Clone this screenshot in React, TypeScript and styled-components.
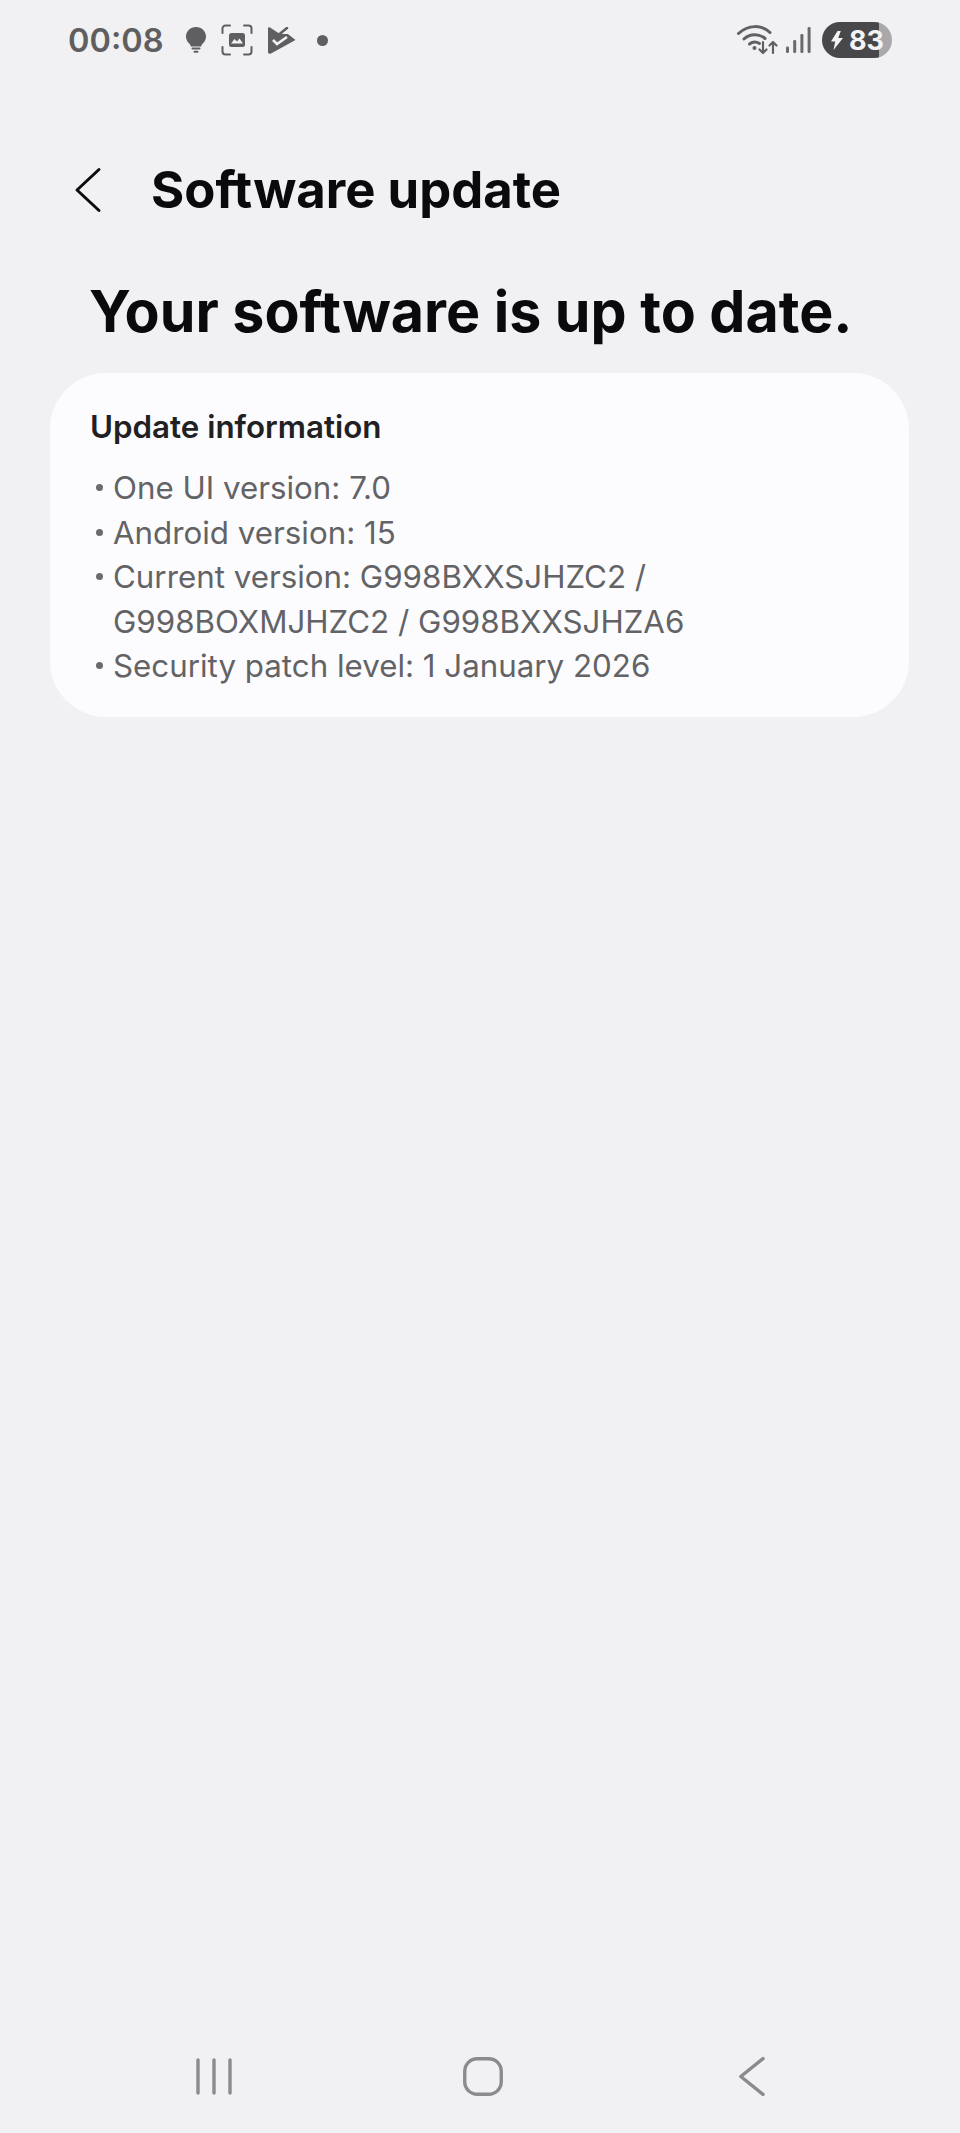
import React from 'react';
import styled, { createGlobalStyle } from 'styled-components';

const GlobalStyle = createGlobalStyle`
  html, body {
    margin: 0;
    padding: 0;
    background: #f1f1f3;
    font-family: Inter, "Noto Sans", "Liberation Sans", sans-serif;
  }
`;

const infoLines = [
  ['One UI version: 7.0'],
  ['Android version: 15'],
  ['Current version: G998BXXSJHZC2 /', 'G998BOXMJHZC2 / G998BXXSJHZA6'],
  ['Security patch level: 1 January 2026'],
];

const BulbIcon = () => (
  <svg width="20" height="26" viewBox="0 0 20 26" fill="#5f5f61">
    <path d="M10 0C4.400 0 0 4.200 0 9.400c0 3.200 1.500 5.300 3.200 7 1 1 1.500 2 1.700 3h10.200c.2-1 .7-2 1.700-3 1.700-1.700 3.200-3.800 3.200-7C20 4.200 15.600 0 10 0z" />
    <rect x="5.500" y="20.500" width="9" height="2" rx="1" />
    <rect x="7.500" y="23.800" width="5" height="2" rx="1" />
  </svg>
);

const CaptureIcon = () => (
  <svg width="32" height="32" viewBox="0 0 32 32" fill="none">
    <path
      d="M1.500 9V4.500a3 3 0 0 1 3-3H9M23 1.500h4.500a3 3 0 0 1 3 3V9M30.500 23v4.500a3 3 0 0 1-3 3H23M9 30.500H4.500a3 3 0 0 1-3-3V23"
      stroke="#5f5f61"
      strokeWidth="2"
      strokeLinecap="round"
    />
    <rect x="8" y="9" width="16" height="14" rx="2.500" fill="#5f5f61" />
    <path d="M10 19.500l3.500-4.500 2.500 2.500 2.500-3 3.500 5z" fill="#f1f1f3" />
  </svg>
);

const FlagCheckIcon = () => (
  <svg width="28" height="27" viewBox="0 0 28 27">
    <path d="M0 1.500C0 .3 1 0 2 .6L12 7l8 0 7.500 6L3 26.500c-1.500.8-3 .2-3-1.500z" fill="#5f5f61" />
    <path d="M11 7.500L19 1" stroke="#5f5f61" strokeWidth="2.600" fill="none" strokeLinecap="round" />
    <path d="M19.500 6.500L22 4" stroke="#f1f1f3" strokeWidth="3" fill="none" />
    <path d="M5 13l4 4 10-7" stroke="#f1f1f3" strokeWidth="2.600" fill="none" />
  </svg>
);

const WifiIcon = () => (
  <svg width="41" height="30" viewBox="0 0 41 30" fill="none">
    <g stroke="#616163" strokeWidth="3" strokeLinecap="round">
      <path d="M1.500 8.500C11 -0.500 25 -0.500 33 7.500" />
      <path d="M7 14c6-5.500 15-5.500 21-.5" />
      <path d="M12.500 19c3-2.300 7-2.300 10-.5" />
    </g>
    <circle cx="17.500" cy="23" r="2" fill="#616163" />
    <g stroke="#616163" strokeWidth="2.200" strokeLinecap="round" strokeLinejoin="round">
      <path d="M26 17v11M22.500 24.500l3.500 3.500 3.500-3.500" />
      <path d="M36 28V17M32.500 20.500L36 17l3.500 3.500" />
    </g>
  </svg>
);

const SignalIcon = () => (
  <svg width="25" height="26" viewBox="0 0 25 26" fill="#6a6a6c">
    <rect x="0" y="19.500" width="3" height="6.500" rx="1.200" />
    <rect x="7.200" y="13" width="3" height="13" rx="1.200" />
    <rect x="14.400" y="7" width="3" height="19" rx="1.200" />
    <rect x="21.600" y="0" width="3" height="26" rx="1.200" />
  </svg>
);

const BoltIcon = () => (
  <svg width="12" height="19" viewBox="0 0 12 19" fill="#f4f4f5">
    <path d="M6.500 0L0 10.500h4.200L2.500 19 12 7H7.200L9.800 0z" />
  </svg>
);

const RecentsIcon = () => (
  <svg width="36" height="42" viewBox="0 0 36 42" fill="none" stroke="#8b8b8d" strokeWidth="3.400" strokeLinecap="round">
    <path d="M2 5v33M18 5v33M34 5v33" />
  </svg>
);

const HomeIcon = () => (
  <svg width="42" height="42" viewBox="0 0 42 42" fill="none">
    <rect x="2.750" y="3.750" width="36.500" height="35.500" rx="12.500" stroke="#8b8b8d" strokeWidth="3.400" />
  </svg>
);

const NavBackIcon = () => (
  <svg width="27" height="42" viewBox="0 0 27 42" fill="none">
    <path d="M25 3.600L2.800 21.500 25 39.400" stroke="#8b8b8d" strokeWidth="3.400" strokeLinecap="round" strokeLinejoin="round" />
  </svg>
);

const App = () => (
  <>
    <GlobalStyle />
    <Page>
      <StatusBar>
        <StatusLeft>
          <Clock>00:08</Clock>
          <Notifications>
            <BulbIcon />
            <CaptureIcon />
            <FlagCheckIcon />
            <MoreDot />
          </Notifications>
        </StatusLeft>
        <StatusRight>
          <WifiIcon />
          <SignalIcon />
          <Battery>
            <BoltIcon />
            <BatteryLevel>83</BatteryLevel>
          </Battery>
        </StatusRight>
      </StatusBar>

      <Header>
        <BackButton>
          <svg width="28" height="48" viewBox="0 0 28 48" fill="none">
            <path d="M25 3.500L3 24l22 20.500" stroke="#0c0c0e" strokeWidth="3" strokeLinecap="round" strokeLinejoin="round" />
          </svg>
        </BackButton>
        <HeaderTitle>Software update</HeaderTitle>
      </Header>

      <Headline>Your software is up to date.</Headline>

      <InfoCard>
        <CardTitle>Update information</CardTitle>
        <InfoList>
          {infoLines.map((lines) => (
            <InfoItem key={lines[0]}>
              {lines.map((line) => (
                <div key={line}>{line}</div>
              ))}
            </InfoItem>
          ))}
        </InfoList>
      </InfoCard>

      <NavBar>
        <NavSlot><RecentsIcon /></NavSlot>
        <NavSlot><HomeIcon /></NavSlot>
        <NavSlot><NavBackIcon /></NavSlot>
      </NavBar>
    </Page>
  </>
);

export default App;

const Page = styled.div`
  width: 960px;
  height: 2133px;
  background: #f1f1f3;
  display: flex;
  flex-direction: column;
  overflow: hidden;
`;

const StatusBar = styled.div`
  height: 80px;
  padding: 0 68px;
  display: flex;
  align-items: center;
  justify-content: space-between;
`;

const StatusLeft = styled.div`
  display: flex;
  align-items: center;
  gap: 22px;
`;

const Clock = styled.div`
  font-size: 32.500px;
  font-weight: 600;
  color: #5f5f61;
`;

const Notifications = styled.div`
  display: flex;
  align-items: center;
  gap: 15px;
`;

const MoreDot = styled.div`
  width: 11px;
  height: 11px;
  margin-left: 6px;
  border-radius: 50%;
  background: #5f5f61;
`;

const StatusRight = styled.div`
  display: flex;
  align-items: center;
  gap: 8px;
`;

const Battery = styled.div`
  width: 70px;
  height: 36px;
  margin-left: 3px;
  padding-left: 9px;
  box-sizing: border-box;
  border-radius: 18px;
  display: flex;
  align-items: center;
  gap: 6px;
  background: linear-gradient(to right, #48484a 0 57px, #a9a9ab 57px);
`;

const BatteryLevel = styled.span`
  font-size: 27px;
  font-weight: 700;
  color: #f4f4f5;
`;

const Header = styled.div`
  height: 60px;
  margin-top: 80px;
  padding-left: 74px;
  display: flex;
  align-items: center;
  gap: 49px;
`;

const BackButton = styled.div`
  display: flex;
`;

const HeaderTitle = styled.h1`
  margin: 0;
  font-size: 50.800px;
  font-weight: 700;
  line-height: 60px;
  color: #0a0a0c;
  white-space: nowrap;
`;

const Headline = styled.h2`
  margin: 59px 0 0 89px;
  font-size: 57.300px;
  font-weight: 700;
  line-height: 64px;
  color: #0a0a0c;
  white-space: nowrap;
`;

const InfoCard = styled.section`
  width: 859px;
  height: 344px;
  margin: 30px 0 0 50px;
  padding: 34px 40px 0;
  box-sizing: border-box;
  border-radius: 56px;
  background: #fcfcfe;
`;

const CardTitle = styled.div`
  font-size: 31.300px;
  font-weight: 600;
  line-height: 40px;
  color: #212123;
`;

const InfoList = styled.ul`
  list-style: none;
  margin: 19px 0 0;
  padding: 0;
`;

const InfoItem = styled.li`
  position: relative;
  padding-left: 23px;
  font-size: 31.300px;
  line-height: 44.500px;
  color: #636366;

  &::before {
    content: '';
    position: absolute;
    left: 6px;
    top: 18px;
    width: 7px;
    height: 7px;
    border-radius: 50%;
    background: #6b6b6e;
  }
`;

const NavBar = styled.nav`
  margin-top: auto;
  height: 78px;
  padding: 0 74px 0 80px;
  display: grid;
  grid-template-columns: repeat(3, 1fr);
  align-items: start;
`;

const NavSlot = styled.div`
  display: flex;
  justify-content: center;
`;
